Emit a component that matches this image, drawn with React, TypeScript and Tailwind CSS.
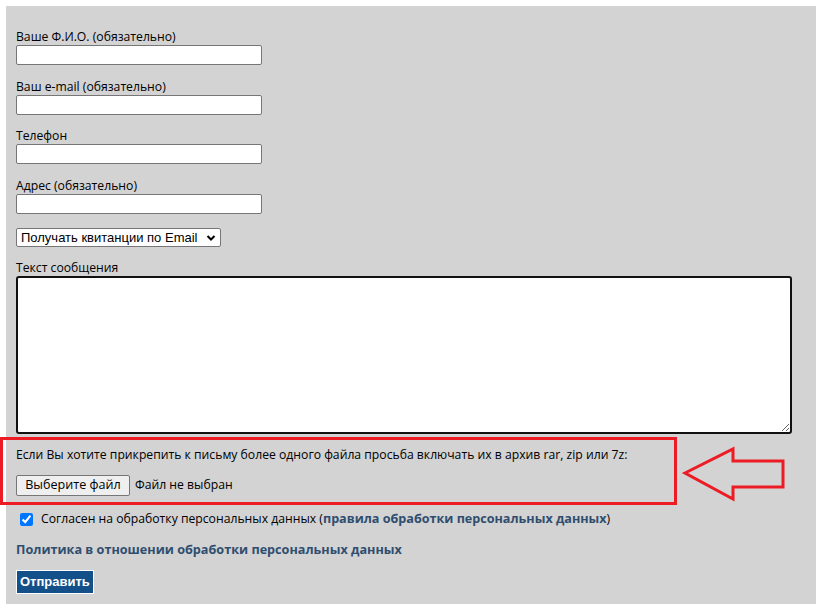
const labelCls = "block text-[12.2px] leading-[16px] text-black";
const inputCls =
  "block w-[246px] h-[20px] bg-white border border-[#767676] rounded-[2px] px-1 text-[13px] outline-none";

const Field = ({ label, className = "" }: { label: string; className?: string }) => (
  <div className={className}>
    <label className={labelCls}>{label}</label>
    <input type="text" className={inputCls} />
  </div>
);

export default function App() {
  return (
    <div className="relative h-[604px] overflow-hidden bg-white font-['Open_Sans',sans-serif]">
      <div className="ml-[6px] mt-[6px] h-[598px] bg-[#d3d3d3] pl-[10px] pt-[23px]">
        <Field label="Ваше Ф.И.О. (обязательно)" />
        <Field label="Ваш e-mail (обязательно)" className="mt-[14px]" />
        <Field label="Телефон" className="mt-[13px]" />
        <Field label="Адрес (обязательно)" className="mt-[14px]" />

        {/* select */}
        <div className="mt-[14px] flex h-[19px] w-[205px] items-center justify-between border border-[#767676] rounded-[2px] bg-white pl-[4px] pr-[4px] font-['Liberation_Sans',sans-serif] text-[13px] text-black">
          <span>Получать квитанции по Email</span>
          <svg width="10" height="8" viewBox="0 0 10 8">
            <path d="M1.5 2 L5 5.5 L8.5 2" fill="none" stroke="#000" strokeWidth="2" />
          </svg>
        </div>

        <label className={`${labelCls} mt-[13px]`}>Текст сообщения</label>
        <textarea className="block h-[158px] w-[776px] border-2 border-[#111] rounded-[3px] bg-white outline-none" />

        {/* file block */}
        <div className="pt-[13px]">
          <p className="text-[12.2px] leading-[16px] text-black">
            Если Вы хотите прикрепить к письму более одного файла просьба включать их в архив rar, zip или 7z:
          </p>
          <div className="mt-[12px] flex items-center gap-[5px] text-[12.2px]">
            <button className="h-[21px] w-[114px] border border-[#767676] rounded-[2px] bg-[#efefef] text-[12.6px] text-black">
              Выберите файл
            </button>
            <span className="text-black">Файл не выбран</span>
          </div>
        </div>

        <div className="mt-[15px] flex items-center gap-[8px] pl-[4px] text-[12.2px] leading-[16px]">
          <input type="checkbox" defaultChecked className="m-0 h-[13px] w-[13px] accent-[#0075ff]" />
          <span className="text-black">
            Согласен на обработку персональных данных (
            <a className="font-bold text-[12.6px] text-[#2f4e6f]">правила обработки персональных данных</a>)
          </span>
        </div>

        <a className="mt-[14px] block text-[12.65px] font-bold leading-[16px] text-[#2f4e6f]">
          Политика в отношении обработки персональных данных
        </a>

        <button className="mt-[13px] h-[24px] border border-white bg-[#13508a] px-[3px] font-['Liberation_Sans',sans-serif] text-[13px] font-bold text-white">
          Отправить
        </button>
      </div>

      {/* annotation box */}
      <div className="pointer-events-none absolute left-0 top-[437px] h-[68px] w-[677px] border-[3px] border-[#ed1c24]" />
      {/* annotation arrow */}
      <svg className="pointer-events-none absolute left-[680px] top-[445px]" width="110" height="60" viewBox="680 445 110 60">
        <path
          d="M685 473 L733 449 L733 461 L783 461 L783 487 L733 487 L733 499 Z"
          fill="none"
          stroke="#ed1c24"
          strokeWidth="3"
          strokeLinejoin="miter"
        />
      </svg>
    </div>
  );
}
